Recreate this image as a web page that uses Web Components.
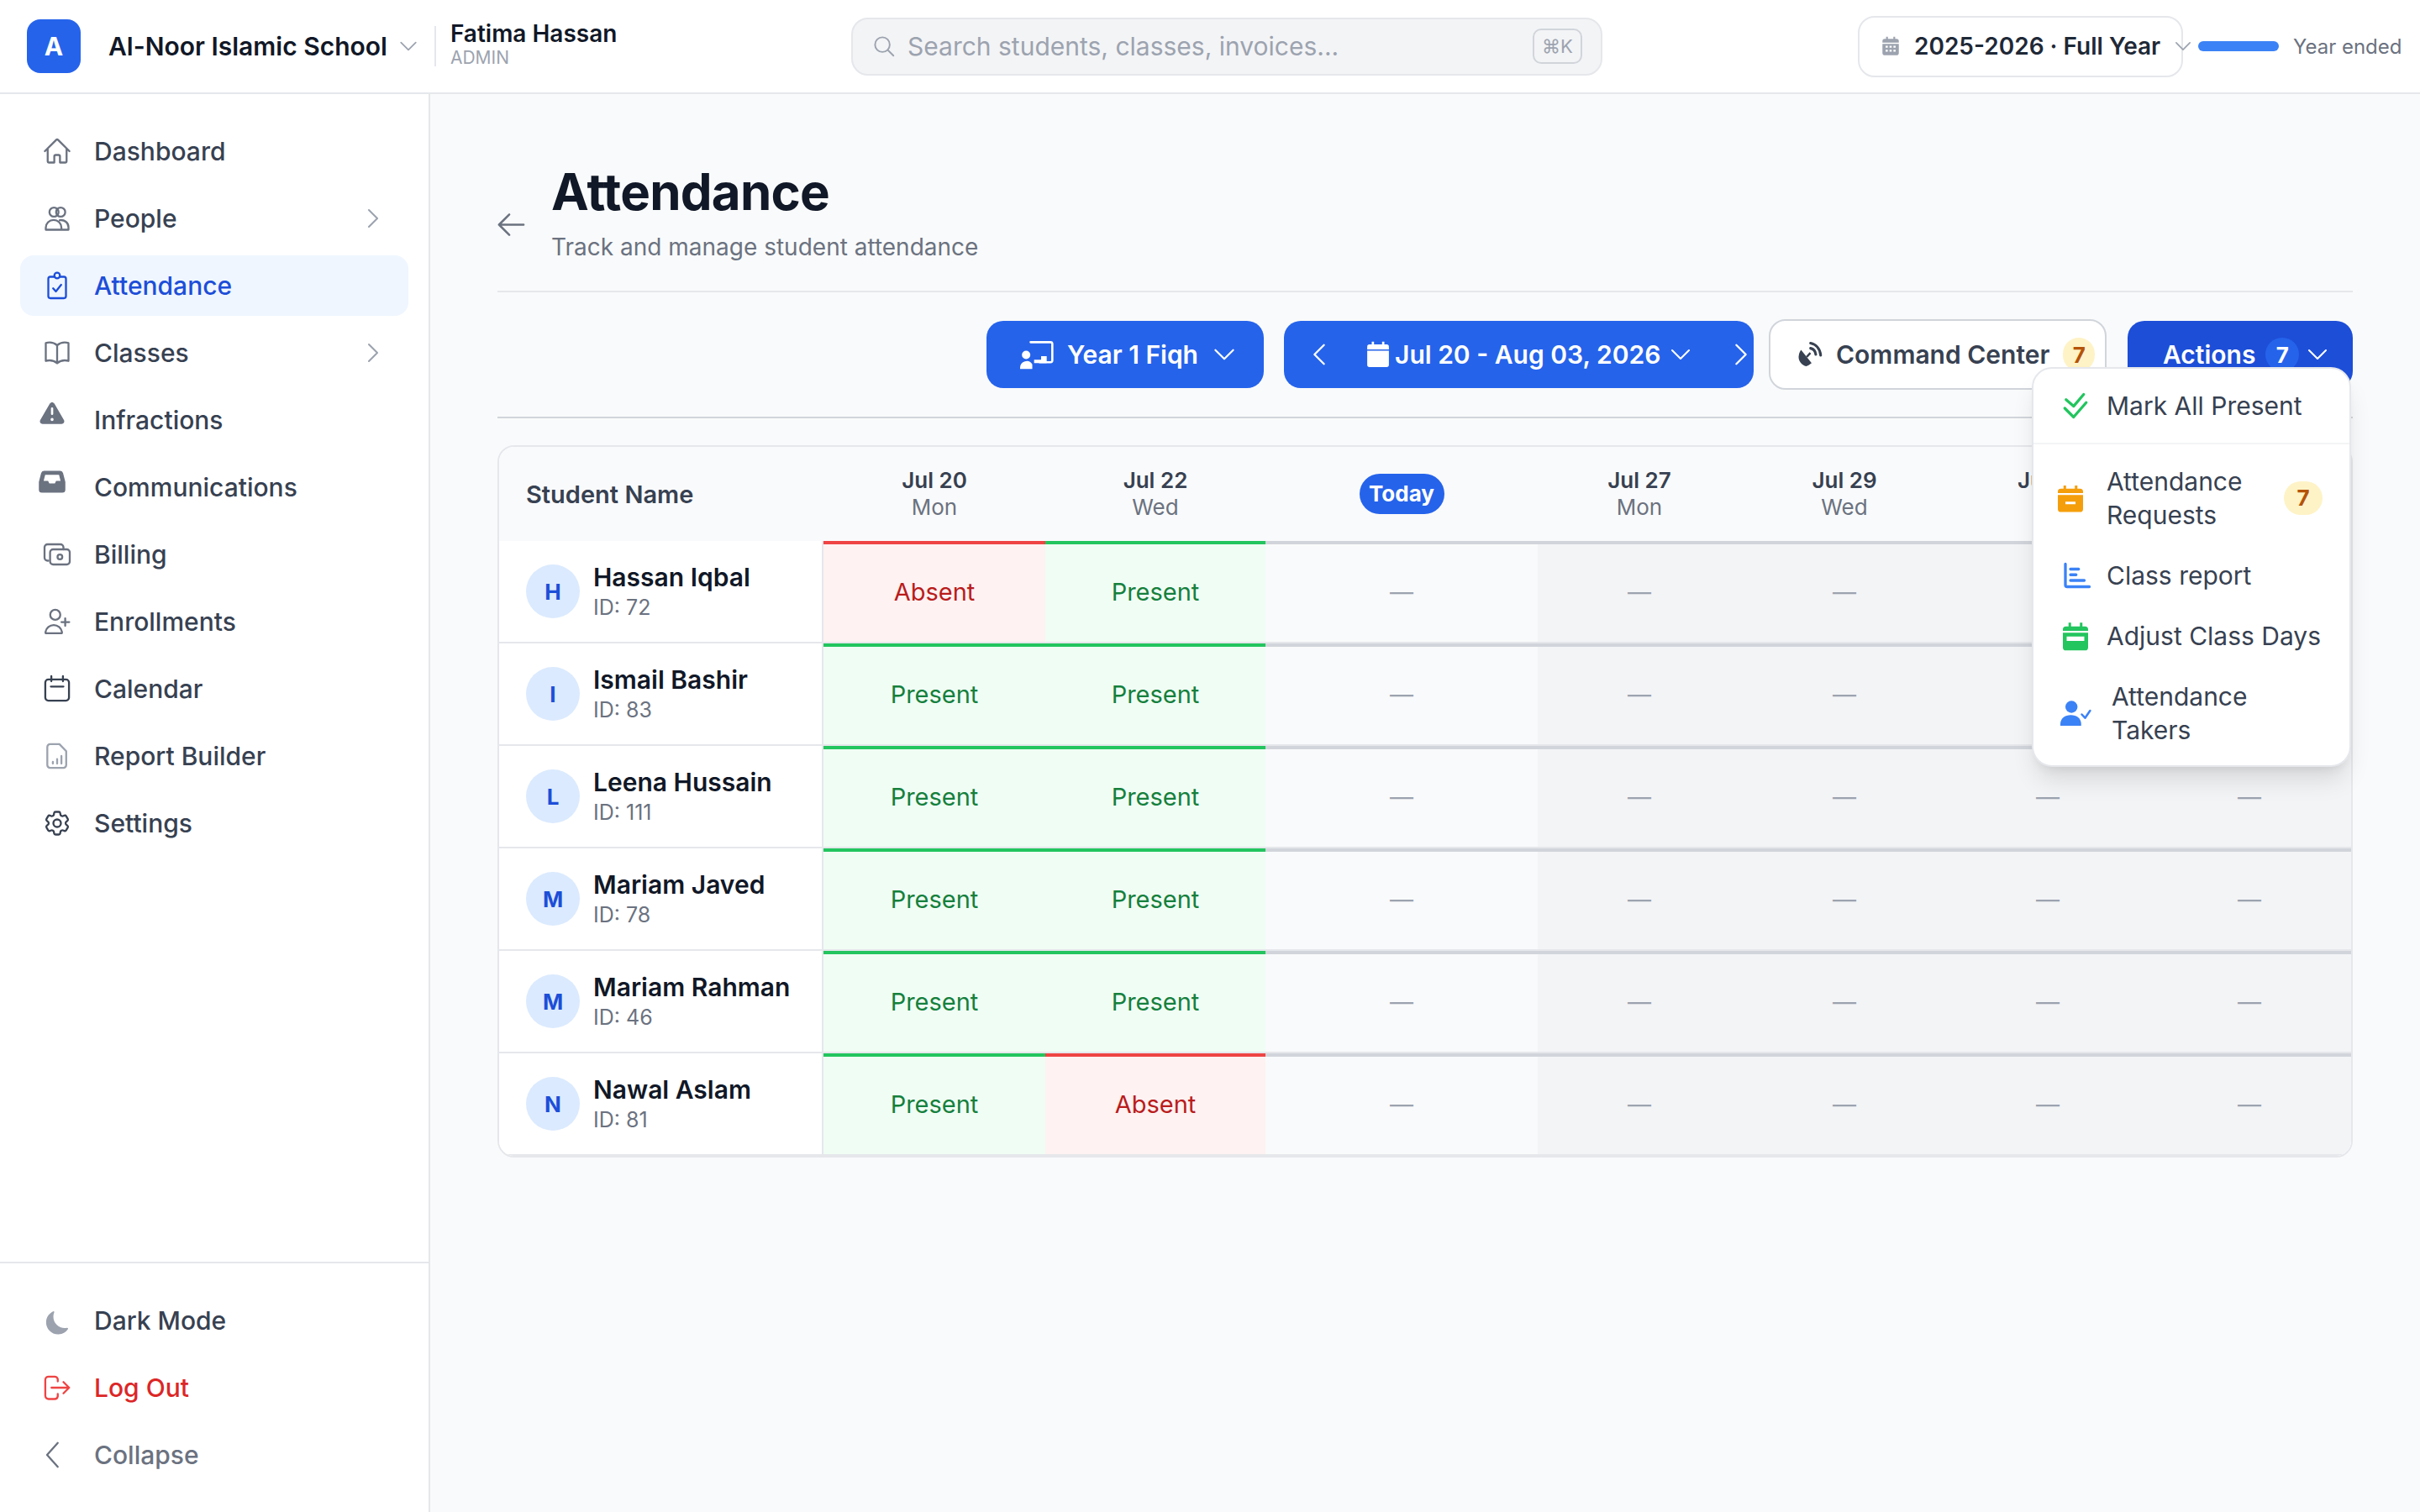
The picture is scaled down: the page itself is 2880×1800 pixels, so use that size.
<!DOCTYPE html>
<html lang="en">
<head>
<meta charset="utf-8">
<title>Attendance</title>
<style>
  html, body { margin: 0; padding: 0; background: #f9fafb; }
  body { font-family: Inter, "Liberation Sans", sans-serif; color: #111827; }
</style>
</head>
<body>
<app-shell>
  <top-bar slot="top">
    <span slot="school">Al-Noor Islamic School</span>
    <span slot="user">Fatima Hassan</span>
    <span slot="role">ADMIN</span>
    <span slot="search">Search students, classes, invoices...</span>
    <span slot="year">2025-2026 · Full Year</span>
    <span slot="status">Year ended</span>
  </top-bar>

  <side-nav slot="side">
    <nav-item icon="home">Dashboard</nav-item>
    <nav-item icon="people" more>People</nav-item>
    <nav-item icon="clipboard" active>Attendance</nav-item>
    <nav-item icon="book" more>Classes</nav-item>
    <nav-item icon="warning" shift>Infractions</nav-item>
    <nav-item icon="inbox" shift>Communications</nav-item>
    <nav-item icon="money">Billing</nav-item>
    <nav-item icon="userplus">Enrollments</nav-item>
    <nav-item icon="calendar" tint="#374151">Calendar</nav-item>
    <nav-item icon="report" tint="#9ca3af">Report Builder</nav-item>
    <nav-item icon="cog" tint="#374151">Settings</nav-item>
    <nav-item slot="foot" icon="moon" tint="#9ca3af">Dark Mode</nav-item>
    <nav-item slot="foot" icon="logout" tint="#ef4444" ink="#dc2626">Log Out</nav-item>
    <nav-item slot="foot" icon="back" tint="#6b7280" ink="#6b7280">Collapse</nav-item>
  </side-nav>

  <page-head>
    <span slot="title">Attendance</span>
    <span slot="sub">Track and manage student attendance</span>
  </page-head>

  <tool-bar>
    <tool-btn style="width:330px;margin-right:24px">
      <ui-icon name="teach" size="40" style="margin-right:16px"></ui-icon>
      <span>Year 1 Fiqh</span>
      <ui-icon name="down" size="34" style="margin-left:14px"></ui-icon>
    </tool-btn>
    <tool-btn style="width:559px;margin-right:18px" pad="24">
      <ui-icon name="left" size="36" style="margin-right:34px"></ui-icon>
      <ui-icon name="calsolid" size="36" style="margin-right:2px"></ui-icon>
      <span>Jul 20 - Aug 03, 2026</span>
      <ui-icon name="down" size="32" style="margin-left:8px"></ui-icon>
      <ui-icon name="right" size="36" style="margin-left:38px"></ui-icon>
    </tool-btn>
    <tool-btn kind="outline" style="width:402px;margin-right:25px" pad="30">
      <ui-icon name="dish" size="34" style="margin-right:14px"></ui-icon>
      <span>Command Center</span>
      <count-pill style="margin-left:16px">7</count-pill>
    </tool-btn>
    <tool-btn kind="deep" style="width:268px" pad="42">
      <span>Actions</span>
      <count-pill tone="blue" style="margin-left:12px">7</count-pill>
      <ui-icon name="down" size="32" style="margin-left:6px"></ui-icon>
    </tool-btn>
    <actions-menu slot="menu">
      <menu-item icon="check2" tint="#22c55e" slot="first">Mark All Present</menu-item>
      <menu-item icon="calminus" tint="#f59e0b" nudge="-6px" badge="7">Attendance Requests</menu-item>
      <menu-item icon="bars" tint="#3b82f6">Class report</menu-item>
      <menu-item icon="calbar" tint="#22c55e">Adjust Class Days</menu-item>
      <menu-item icon="takers" tint="#3b82f6" gap="25">Attendance Takers</menu-item>
    </actions-menu>
  </tool-bar>

  <att-table>
    <att-row head>
      <span slot="head">Student Name</span>
      <date-head day="Jul 20" week="Mon"></date-head>
      <date-head day="Jul 22" week="Wed"></date-head>
      <date-head today></date-head>
      <date-head day="Jul 27" week="Mon" off></date-head>
      <date-head day="Jul 29" week="Wed" off></date-head>
      <date-head day="Jul 31" week="Fri" off></date-head>
      <date-head day="Aug 03" week="Mon" off></date-head>
    </att-row>
    <att-row name="Hassan Iqbal" sid="72" marks="a p"></att-row>
    <att-row name="Ismail Bashir" sid="83" marks="p p"></att-row>
    <att-row name="Leena Hussain" sid="111" marks="p p"></att-row>
    <att-row name="Mariam Javed" sid="78" marks="p p"></att-row>
    <att-row name="Mariam Rahman" sid="46" marks="p p"></att-row>
    <att-row name="Nawal Aslam" sid="81" marks="p a"></att-row>
  </att-table>
</app-shell>

<script>
const COLUMNS = '386px 264px 262px 324px 242px 246px 238px 242px';

// 24-unit icons unless the entry says otherwise. s = stroked, f = filled
const ICONS = {
  home: `<path class="s" d="M2.25 12l8.954-8.955c.44-.439 1.152-.439 1.591 0L21.75 12M4.5 9.75v10.125c0 .621.504 1.125 1.125 1.125H9.75v-4.875c0-.621.504-1.125 1.125-1.125h2.25c.621 0 1.125.504 1.125 1.125V21h4.125c.621 0 1.125-.504 1.125-1.125V9.75"/>`,
  people: `<circle class="s" cx="9.5" cy="7" r="3.6"/><circle class="s" cx="14.8" cy="7" r="3.6"/><path class="s" d="M3 21v-1.6a6.2 6.2 0 0 1 12.4 0V21zM14 13.4c3.9-.5 7 2 7 5.6V21h-5.6"/>`,
  clipboard: `<rect class="s" x="5" y="5" width="14" height="17" rx="1.6"/><circle class="w" cx="12" cy="4" r="2.2"/><path class="s" d="M8.8 14.2l2.2 2.4 4.2-5.2"/>`,
  book: `<path class="s" d="M12 6.042A8.967 8.967 0 006 3.75c-1.052 0-2.062.18-3 .512v14.25A8.987 8.987 0 016 18c2.305 0 4.408.867 6 2.292m0-14.25a8.966 8.966 0 016-2.292c1.052 0 2.062.18 3 .512v14.25A8.987 8.987 0 0018 18a8.967 8.967 0 00-6 2.292m0-14.25v14.25"/>`,
  warning: `<g transform="scale(1.2)"><path class="f" fill-rule="evenodd" d="M8.485 2.495c.673-1.167 2.357-1.167 3.03 0l6.28 10.875c.673 1.167-.17 2.625-1.516 2.625H3.72c-1.347 0-2.189-1.458-1.515-2.625L8.485 2.495zM10 5a.75.75 0 01.75.75v3.5a.75.75 0 01-1.5 0v-3.5A.75.75 0 0110 5zm0 9a1 1 0 100-2 1 1 0 000 2z"/></g>`,
  inbox: `<path class="f" fill-rule="evenodd" d="M5.6 3h12.8a2.4 2.4 0 0 1 2.3 1.8l1.8 7V18a2.4 2.4 0 0 1-2.4 2.4H3.9A2.4 2.4 0 0 1 1.5 18v-6.2l1.8-7A2.4 2.4 0 0 1 5.6 3zm.9 3.2L5.3 11h3.5l1 2h4.4l1-2h3.5l-1.2-4.8z"/>`,
  money: `<path class="s" d="M5 17H4.4A2.4 2.4 0 0 1 2 14.6V6.4A2.4 2.4 0 0 1 4.4 4h10.2A2.4 2.4 0 0 1 17 6.4V8"/><rect class="s" x="6.4" y="8" width="15.6" height="12" rx="2.4"/><circle class="s" cx="14.2" cy="14" r="1.9"/>`,
  userplus: `<circle class="s" cx="10.5" cy="6.6" r="4"/><path class="s" d="M2.8 21.2v-1a6.6 6.6 0 0 1 13 0v1zM18.4 9.4v6M15.4 12.4h6.2"/>`,
  calendar: `<rect class="s" x="2.6" y="4.6" width="18.8" height="16.8" rx="2.4"/><path class="s" d="M7.4 2v4M16.6 2v4M7 10.2h10"/>`,
  report: `<path class="s" d="M6.4 2.6h7.4l5.4 5.6v11a2.2 2.2 0 0 1-2.2 2.2H6.4a2.2 2.2 0 0 1-2.2-2.2V4.8a2.2 2.2 0 0 1 2.2-2.2z"/><path class="s" d="M8.6 18v-1.4M12 18v-3.6M15.4 18v-6"/>`,
  cog: `<path class="s" d="M9.594 3.94c.09-.542.56-.94 1.11-.94h2.593c.55 0 1.02.398 1.11.94l.213 1.281c.063.374.313.686.645.87.074.04.147.083.22.127.324.196.72.257 1.075.124l1.217-.456a1.125 1.125 0 011.37.49l1.296 2.247a1.125 1.125 0 01-.26 1.431l-1.003.827c-.293.24-.438.613-.431.992a6.759 6.759 0 010 .255c-.007.378.138.75.43.99l1.005.828c.424.35.534.954.26 1.43l-1.298 2.247a1.125 1.125 0 01-1.369.491l-1.217-.456c-.355-.133-.75-.072-1.076.124a6.57 6.57 0 01-.22.128c-.331.183-.581.495-.644.869l-.213 1.28c-.09.543-.56.941-1.11.941h-2.594c-.55 0-1.02-.398-1.11-.94l-.213-1.281c-.062-.374-.312-.686-.644-.87a6.52 6.52 0 01-.22-.127c-.325-.196-.72-.257-1.076-.124l-1.217.456a1.125 1.125 0 01-1.369-.49l-1.297-2.247a1.125 1.125 0 01.26-1.431l1.004-.827c.292-.24.437-.613.43-.992a6.932 6.932 0 010-.255c.007-.378-.138-.75-.43-.99l-1.004-.828a1.125 1.125 0 01-.26-1.43l1.297-2.247a1.125 1.125 0 011.37-.491l1.216.456c.356.133.751.072 1.076-.124.072-.044.146-.087.22-.128.332-.183.582-.495.644-.869l.214-1.281z"/><path class="s" d="M15 12a3 3 0 11-6 0 3 3 0 016 0z"/>`,
  moon: `<path class="f" d="M9.528 4.718a.75.75 0 01.162.819A8.97 8.97 0 009 9a9 9 0 009 9 8.97 8.97 0 001.9-.2.75.75 0 01.7 1.1 9 9 0 01-7.85 4.1c-5.3 0-9.5-4.2-9.5-9.5 0-4 2.4-7.2 5.46-8.694a.75.75 0 01.818.162z"/>`,
  logout: `<path class="s" d="M12.5 7V5.2A2.6 2.6 0 0 0 9.9 3.2H5.2a2.6 2.6 0 0 0-2.6 2.6v12.6a2.6 2.6 0 0 0 2.6 2.6h4.7a2.6 2.6 0 0 0 2.6-2.2V17M7.5 12h14M17 7.5l4.5 4.5-4.5 4.5"/>`,
  back: `<path class="s" d="M12.5 2.5L4 12l8.5 9.5"/>`,
  down: `<path class="s" d="M19.5 8.25l-7.5 7.5-7.5-7.5"/>`,
  right: `<path class="s" d="M8.25 4.5l7.5 7.5-7.5 7.5"/>`,
  left: `<path class="s" d="M15.75 4.5l-7.5 7.5 7.5 7.5"/>`,
  arrow: `<path class="s" d="M10.5 19.5L3 12l7.5-7.5M3 12h18"/>`,
  search: `<circle class="s" cx="10.5" cy="10.5" r="7"/><path class="s" d="M15.8 15.8L21 21"/>`,
  yearcal: `<path class="f" fill-rule="evenodd" d="M7 1.5h2v2.5h6V1.5h2V4h1.4A2.6 2.6 0 0 1 21 6.6V8H3V6.6A2.6 2.6 0 0 1 5.6 4H7zM3 9.4h18v10A2.6 2.6 0 0 1 18.400 22H5.600A2.600 2.600 0 0 1 3 19.400zM6.500 11.600v2h2.400v-2zM10.800 11.600v2h2.400v-2zM15.100 11.600v2h2.400v-2zM6.500 16v2h2.400v-2zM10.800 16v2h2.400v-2zM15.100 16v2h2.400v-2z"/>`,
  teach: `<path class="s" d="M7.500 3.200h14.200a1.300 1.300 0 0 1 1.300 1.300v11.700a1.300 1.300 0 0 1-1.300 1.300H14"/><circle class="f" cx="4.300" cy="12.300" r="3"/><path class="f" d="M0 22.300v-.9a4.700 4.700 0 0 1 8.700-2.400v3.300zM10 15.800h5v-2.600h4v5h-9z"/>`,
  calsolid: `<path class="f" d="M7 1.800h1.800V4h6.400V1.800H17V4h1.800A1.800 1.800 0 0 1 20.600 5.800V8H3.400V5.800A1.800 1.800 0 0 1 5.200 4H7zM3.400 9h17.200v11.200a1.800 1.800 0 0 1-1.800 1.800H5.200a1.800 1.800 0 0 1-1.800-1.800z"/>`,
  dish: `<path class="f" d="M4.500 8.200l8.900 11.100c-1.700 1.400-3.400 2.300-4.600 2.600C5.700 21.300 1.200 17.500 2.800 11.800c.3-1.200 1-2.500 1.700-3.600z"/><path class="f" d="M8.600 13.500l3.100-3.400 1.300 1.200-3.100 3.400z"/><path class="a" d="M12.500 2.500c4.800 1 8 5 8.500 10.200M12.500 6.800c2.600.6 4.100 2.500 4.400 5.200"/>`,
  check2: `<path class="a" d="M4.500 7.200l6 5.200 8-9.400M3.500 14l7 7 10-11.500"/>`,
  calminus: `<path class="f" fill-rule="evenodd" d="M6.500 2h2v2.500h7V2h2v2.500h2.100A2.400 2.400 0 0 1 22 6.900V8H2V6.900A2.400 2.400 0 0 1 4.400 4.500h2.100zM2 9.500h20v11.100a2.400 2.400 0 0 1-2.400 2.400H4.400A2.400 2.400 0 0 1 2 20.600zM8 14.800v2h8v-2z"/>`,
  calbar: `<path class="f" fill-rule="evenodd" d="M6.500 1.500h2v3h7v-3h2v3h2.100A2.400 2.400 0 0 1 22 6.900V8H2V6.900A2.400 2.400 0 0 1 4.400 4.500h2.100zM2 9.500h20v11.600a2.400 2.400 0 0 1-2.400 2.400H4.400A2.400 2.400 0 0 1 2 21.100zM5 12.500v3.500h14v-3.500z"/>`,
  bars: `<path class="a" d="M4 3v16.600a1.400 1.400 0 0 0 1.400 1.400H23"/><path class="a" d="M8 7h6.500M8 11.500h4.500M8 16h11"/>`,
  takers: `<circle class="f" cx="8.800" cy="7" r="4.800"/><path class="f" d="M0 22v-1.500c0-4.300 3.700-7 8.300-7s8.200 2.700 8.200 7V22z"/><path class="a" d="M17 13l2.600 2.800L23.600 10" style="stroke-width:1.700"/>`
};

// plain symbol element, all the svg goes through here
class UiIcon extends HTMLElement {
  connectedCallback() {
    const size = this.getAttribute('size') || 36;
    const glyph = ICONS[this.getAttribute('name')] || '';
    if (!this.shadowRoot) this.attachShadow({ mode: 'open' });
    this.shadowRoot.innerHTML = `
      <style>
        :host { display: inline-flex; flex: none; width: ${size}px; height: ${size}px; color: inherit; }
        svg { width: 100%; height: 100%; display: block; overflow: visible; }
        .s { fill: none; stroke: currentColor; stroke-width: 1.55; stroke-linecap: round; stroke-linejoin: round; }
        .a { fill: none; stroke: currentColor; stroke-width: 2.2; stroke-linecap: round; stroke-linejoin: round; }
        .f { fill: currentColor; }
        .w { fill: var(--knock, #eff6ff); stroke: currentColor; stroke-width: 1.55; }
      </style>
      <svg viewBox="0 0 24 24">${glyph}</svg>`;
  }
}
customElements.define('ui-icon', UiIcon);

class AppShell extends HTMLElement {
  constructor() {
    super();
    this.attachShadow({ mode: 'open' }).innerHTML = `
      <style>
        :host { display: flex; flex-direction: column; width: 2880px; height: 1800px; overflow: hidden; background: #f9fafb; }
        .body { flex: 1; display: flex; min-height: 0; }
        main { flex: 1; min-width: 0; padding: 80px 80px 0; box-sizing: border-box; }
      </style>
      <slot name="top"></slot>
      <div class="body">
        <slot name="side"></slot>
        <main><slot></slot></main>
      </div>`;
  }
}
customElements.define('app-shell', AppShell);

class TopBar extends HTMLElement {
  constructor() {
    super();
    this.attachShadow({ mode: 'open' }).innerHTML = `
      <style>
        :host { display: flex; align-items: center; height: 112px; box-sizing: border-box; background: #fff; border-bottom: 2px solid #e5e7eb; padding-left: 32px; }
        .left { width: 981px; flex: none; display: flex; align-items: center; }
        .logo { width: 64px; height: 64px; border-radius: 16px; background: #2563eb; color: #fff; font-size: 30px; font-weight: 700; display: flex; align-items: center; justify-content: center; }
        .school { margin-left: 33px; font-size: 30px; font-weight: 600; color: #111827; white-space: nowrap; }
        .caret { color: #9ca3af; margin-left: 11px; }
        .who { margin-left: 17px; height: 48px; border-left: 2px solid #e5e7eb; padding-left: 17px; display: flex; flex-direction: column; justify-content: center; }
        .name { font-size: 28px; font-weight: 600; color: #111827; line-height: 32px; margin-top: -4px; }
        .role { font-size: 21px; color: #9ca3af; line-height: 26px; }
        .search { width: 894px; height: 69px; flex: none; box-sizing: border-box; background: #f3f4f6; border: 2px solid #e5e7eb; border-radius: 20px; display: flex; align-items: center; padding: 0 22px; color: #9ca3af; font-size: 30px; }
        .search ui-icon { margin-right: 13px; }
        .kbd { margin-left: auto; width: 59px; height: 42px; box-sizing: border-box; border: 2px solid #d1d5db; border-radius: 10px; font-size: 22px; display: flex; align-items: center; justify-content: center; }
        .year { margin-left: 304px; width: 387px; height: 73px; flex: none; box-sizing: border-box; background: #fff; border: 2px solid #e5e7eb; border-radius: 20px; display: flex; align-items: center; padding-left: 24px; font-size: 28px; font-weight: 600; color: #1f2937; white-space: nowrap; }
        .year .cal { color: #9ca3af; margin-right: 15px; }
        .year .caret { margin-left: 14px; }
        .bar { width: 96px; height: 12px; border-radius: 6px; background: #3b82f6; margin-left: 18px; flex: none; }
        .status { margin-left: 17px; font-size: 24px; color: #6b7280; white-space: nowrap; }
      </style>
      <div class="left">
        <div class="logo">A</div>
        <div class="school"><slot name="school"></slot></div>
        <ui-icon class="caret" name="down" size="28"></ui-icon>
        <div class="who">
          <div class="name"><slot name="user"></slot></div>
          <div class="role"><slot name="role"></slot></div>
        </div>
      </div>
      <div class="search">
        <ui-icon name="search" size="30"></ui-icon>
        <slot name="search"></slot>
        <div class="kbd">⌘K</div>
      </div>
      <div class="year">
        <ui-icon class="cal" name="yearcal" size="26"></ui-icon>
        <slot name="year"></slot>
        <ui-icon class="caret" name="down" size="26"></ui-icon>
      </div>
      <div class="bar"></div>
      <div class="status"><slot name="status"></slot></div>`;
  }
}
customElements.define('top-bar', TopBar);

class SideNav extends HTMLElement {
  constructor() {
    super();
    this.attachShadow({ mode: 'open' }).innerHTML = `
      <style>
        :host { display: flex; flex-direction: column; width: 512px; flex: none; box-sizing: border-box; background: #fff; border-right: 2px solid #e5e7eb; }
        .top, .foot { display: flex; flex-direction: column; gap: 8px; padding: 32px 24px; }
        .top { flex: 1; }
        .foot { border-top: 2px solid #e5e7eb; }
      </style>
      <div class="top"><slot></slot></div>
      <div class="foot"><slot name="foot"></slot></div>`;
  }
}
customElements.define('side-nav', SideNav);

class NavItem extends HTMLElement {
  connectedCallback() {
    const active = this.hasAttribute('active');
    const ink = this.getAttribute('ink') || (active ? '#1d4ed8' : '#374151');
    const tint = this.getAttribute('tint') || (active ? '#1d4ed8' : '#6b7280');
    const shift = this.hasAttribute('shift') ? 'transform: translate(-6px,-6px);' : '';
    this.attachShadow({ mode: 'open' }).innerHTML = `
      <style>
        :host { display: flex; align-items: center; height: 72px; padding-left: 26px; border-radius: 16px; font-size: 30px; font-weight: 500; color: ${ink}; background: ${active ? '#eff6ff' : 'transparent'}; }
        .ico { color: ${tint}; margin-right: 26px; --knock: ${active ? '#eff6ff' : '#fff'}; ${shift} }
        .more { margin-left: auto; margin-right: 26px; color: #9ca3af; }
      </style>
      <ui-icon class="ico" name="${this.getAttribute('icon')}" size="36"></ui-icon>
      <slot></slot>
      ${this.hasAttribute('more') ? '<ui-icon class="more" name="right" size="32"></ui-icon>' : ''}`;
  }
}
customElements.define('nav-item', NavItem);

class PageHead extends HTMLElement {
  constructor() {
    super();
    this.attachShadow({ mode: 'open' }).innerHTML = `
      <style>
        :host { display: flex; align-items: center; padding-bottom: 32px; border-bottom: 2px solid #e5e7eb; }
        .arrow { color: #6b7280; margin-right: 28px; margin-top: 28px; margin-left: -3px; }
        h1 { margin: 0; font-size: 60px; font-weight: 700; line-height: 72px; color: #111827; letter-spacing: -.75px; }
        p { margin: 10px 0 0; font-size: 28px; line-height: 40px; color: #6b7280; }
      </style>
      <ui-icon class="arrow" name="arrow" size="39"></ui-icon>
      <div>
        <h1><slot name="title"></slot></h1>
        <p><slot name="sub"></slot></p>
      </div>`;
  }
}
customElements.define('page-head', PageHead);

class ToolBar extends HTMLElement {
  constructor() {
    super();
    this.attachShadow({ mode: 'open' }).innerHTML = `
      <style>
        :host { display: flex; justify-content: flex-end; align-items: center; position: relative; height: 80px; padding: 34px 0; border-bottom: 2px solid #d1d5db; }
      </style>
      <slot></slot>
      <slot name="menu"></slot>`;
  }
}
customElements.define('tool-bar', ToolBar);

class ToolBtn extends HTMLElement {
  connectedCallback() {
    const kind = this.getAttribute('kind') || 'blue';
    const pad = this.getAttribute('pad') || 40;
    const look = {
      blue: 'background:#2563eb;color:#fff;height:80px;',
      deep: 'background:#1d4ed8;color:#fff;height:80px;',
      outline: 'background:#fff;color:#374151;height:84px;border:2px solid #d1d5db;'
    }[kind];
    this.attachShadow({ mode: 'open' }).innerHTML = `
      <style>
        :host { display: flex; align-items: center; flex: none; box-sizing: border-box; border-radius: 20px; padding-left: ${pad}px; font-size: 30px; font-weight: 600; white-space: nowrap; ${look} }
      </style>
      <slot></slot>`;
  }
}
customElements.define('tool-btn', ToolBtn);

class CountPill extends HTMLElement {
  connectedCallback() {
    const blue = this.getAttribute('tone') === 'blue';
    this.attachShadow({ mode: 'open' }).innerHTML = `
      <style>
        :host { display: inline-flex; align-items: center; justify-content: center; flex: none; width: ${blue ? 40 : 38}px; height: 40px; border-radius: 20px; font-size: 26px; font-weight: 700; background: ${blue ? '#2563eb' : '#fef3c7'}; color: ${blue ? '#fff' : '#b45309'}; }
      </style>
      <slot></slot>`;
  }
}
customElements.define('count-pill', CountPill);

class ActionsMenu extends HTMLElement {
  constructor() {
    super();
    this.attachShadow({ mode: 'open' }).innerHTML = `
      <style>
        :host { position: absolute; z-index: 5; right: 2px; top: 89px; width: 380px; box-sizing: border-box; background: #fff; border: 2px solid #e5e7eb; border-radius: 24px; box-shadow: 0 20px 30px -6px rgba(0,0,0,.12), 0 8px 12px -6px rgba(0,0,0,.08); }
        .first { padding: 8px 0; border-bottom: 2px solid #f3f4f6; }
        .rest { padding: 8px 0 6px; }
      </style>
      <div class="first"><slot name="first"></slot></div>
      <div class="rest"><slot></slot></div>`;
  }
}
customElements.define('actions-menu', ActionsMenu);

class MenuItem extends HTMLElement {
  connectedCallback() {
    const gap = this.getAttribute('gap') || 19;
    const nudge = this.getAttribute('nudge') || '0';
    const badge = this.getAttribute('badge');
    this.attachShadow({ mode: 'open' }).innerHTML = `
      <style>
        :host { display: flex; align-items: center; padding: 16px 32px; font-size: 30px; line-height: 40px; font-weight: 400; color: #374151; }
        ui-icon { color: ${this.getAttribute('tint')}; margin-right: ${gap}px; transform: translateX(${nudge}); }
        .txt { flex: 1; min-width: 0; }
        .pill { flex: none; width: 46px; height: 40px; border-radius: 20px; background: #fef3c7; color: #b45309; font-size: 26px; font-weight: 700; display: flex; align-items: center; justify-content: center; margin-left: 20px; }
      </style>
      <ui-icon name="${this.getAttribute('icon')}" size="36"></ui-icon>
      <div class="txt"><slot></slot></div>
      ${badge ? `<div class="pill">${badge}</div>` : ''}`;
  }
}
customElements.define('menu-item', MenuItem);

class AttTable extends HTMLElement {
  constructor() {
    super();
    this.attachShadow({ mode: 'open' }).innerHTML = `
      <style>
        :host { display: block; margin-top: 32px; box-sizing: border-box; background: #fff; border: 2px solid #e5e7eb; border-radius: 20px; overflow: hidden; }
      </style>
      <slot></slot>`;
  }
}
customElements.define('att-table', AttTable);

class DateHead extends HTMLElement {
  connectedCallback() {
    const today = this.hasAttribute('today');
    this.attachShadow({ mode: 'open' }).innerHTML = `
      <style>
        :host { display: flex; flex-direction: column; align-items: center; justify-content: center; height: 112px; }
        .day { font-size: 26px; line-height: 32px; font-weight: 600; color: #374151; }
        .week { font-size: 26px; line-height: 32px; color: #6b7280; }
        .today { background: #2563eb; color: #fff; font-size: 26px; font-weight: 700; line-height: 32px; padding: 8px 0; width: 101px; text-align: center; border-radius: 24px; }
      </style>
      ${today ? '<div class="today">Today</div>'
              : `<div class="day">${this.getAttribute('day')}</div><div class="week">${this.getAttribute('week')}</div>`}`;
  }
}
customElements.define('date-head', DateHead);

class AttRow extends HTMLElement {
  connectedCallback() {
    const root = this.attachShadow({ mode: 'open' });
    if (this.hasAttribute('head')) {
      root.innerHTML = `
        <style>
          :host { display: grid; grid-template-columns: ${COLUMNS}; background: #f9fafb; }
          .h { height: 112px; display: flex; align-items: center; padding-left: 32px; font-size: 29px; font-weight: 600; color: #374151; }
        </style>
        <div class="h"><slot name="head"></slot></div>
        <slot></slot>`;
      return;
    }
    const name = this.getAttribute('name');
    const marks = this.getAttribute('marks').split(' ');
    const cell = (m) => {
      if (m === 'a') return '<div class="c a">Absent</div>';
      return '<div class="c p">Present</div>';
    };
    const empty = (off) => `<div class="c e ${off ? 'off' : ''}">—</div>`;
    root.innerHTML = `
      <style>
        :host { display: grid; grid-template-columns: ${COLUMNS}; height: 122px; box-sizing: border-box; border-bottom: 2px solid #e5e7eb; background: #fff; }
        .who { display: flex; align-items: center; padding-left: 32px; border-right: 2px solid #e5e7eb; box-sizing: border-box; }
        .av { width: 64px; height: 64px; border-radius: 50%; background: #dbeafe; color: #1d4ed8; font-size: 26px; font-weight: 700; display: flex; align-items: center; justify-content: center; margin-right: 16px; flex: none; }
        .nm { font-size: 30px; font-weight: 600; color: #111827; line-height: 36px; }
        .id { font-size: 25px; color: #6b7280; line-height: 32px; margin-top: 2px; }
        .c { display: flex; align-items: center; justify-content: center; box-sizing: border-box; border-top: 4px solid #d1d5db; padding-bottom: 4px; font-size: 29px; }
        .a { background: #fef2f2; color: #b91c1c; border-top-color: #ef4444; }
        .p { background: #f0fdf4; color: #15803d; border-top-color: #22c55e; }
        .e { background: #f9fafb; color: #9ca3af; font-size: 28px; padding-bottom: 2px; }
        .off { background: #f3f4f6; }
      </style>
      <div class="who">
        <div class="av">${name[0]}</div>
        <div><div class="nm">${name}</div><div class="id">ID: ${this.getAttribute('sid')}</div></div>
      </div>
      ${marks.map(cell).join('')}
      ${empty(false)}${empty(true)}${empty(true)}${empty(true)}${empty(true)}`;
  }
}
customElements.define('att-row', AttRow);
</script>
</body>
</html>
